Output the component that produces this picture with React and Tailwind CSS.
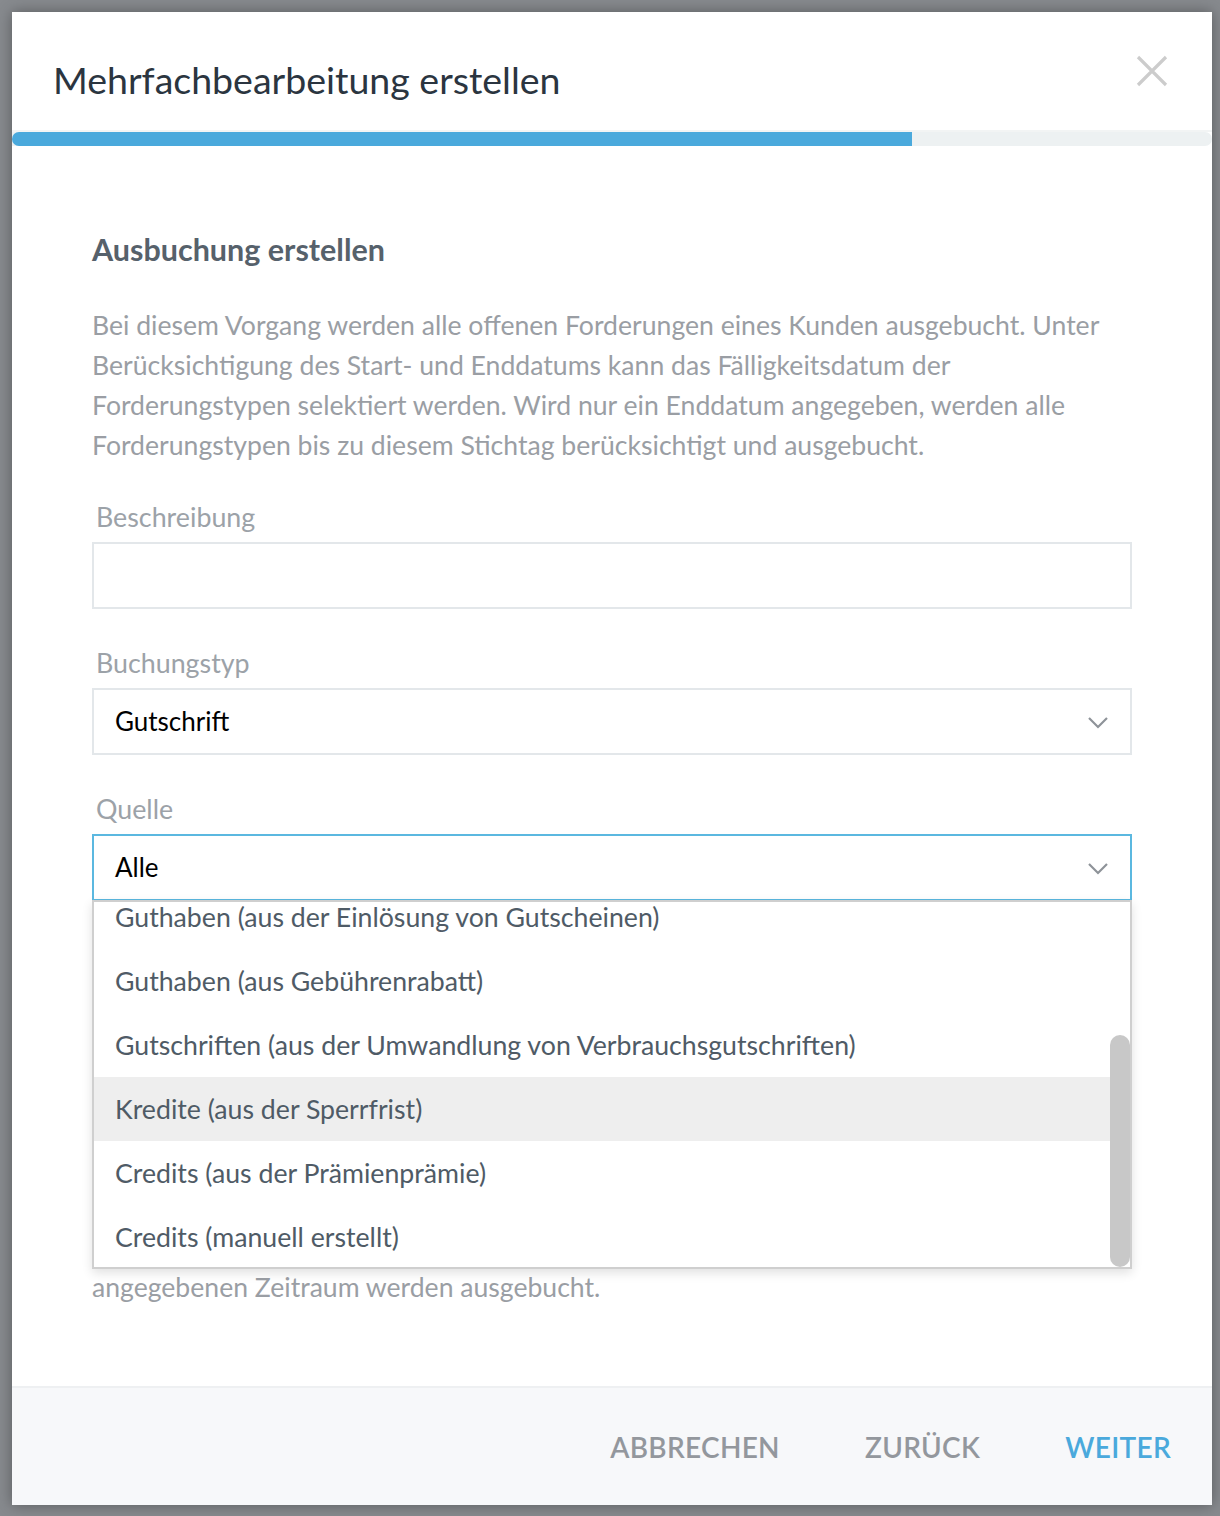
import React from "react";

/**
 * Mehrfachbearbeitung modal
 * Step "Ausbuchung erstellen" with an open source dropdown
 */
const options = [
  "Guthaben (aus der Einlösung von Gutscheinen)",
  "Guthaben (aus Gebührenrabatt)",
  "Gutschriften (aus der Umwandlung von Verbrauchsgutschriften)",
  "Kredite (aus der Sperrfrist)",
  "Credits (aus der Prämienprämie)",
  "Credits (manuell erstellt)",
];

const Chevron = () => (
  <svg width="22" height="14" viewBox="0 0 22 14" fill="none">
    <path d="M2 3l9 9 9-9" stroke="#8e9399" strokeWidth="2.2" />
  </svg>
);

const Label = ({ children }) => (
  <div className="pl-1 text-[26.8px] leading-[40px] text-[#9ca2a8] mb-[5px]">{children}</div>
);

const App = () => {
  return (
    <div
      className="min-h-screen bg-[#878a8e] pt-[12px] pl-[12px] pr-[8px] pb-[11px]"
      style={{ fontFamily: "Lato, 'Open Sans', sans-serif" }}
    >
      <div className="bg-white flex flex-col shadow-[0_0_14px_rgba(0,0,0,0.35)] h-[1493px]">
        {/* Header */}
        <div className="h-[120px] flex items-center justify-between pl-[41px] pr-[44px] border-b-2 border-[#f2f4f4]">
          <h1 className="mt-[18px] text-[37.5px] text-[#2b3540]">Mehrfachbearbeitung erstellen</h1>
          <svg width="32" height="32" viewBox="0 0 32 32">
            <path d="M2 2l28 28M30 2L2 30" stroke="#cccccc" strokeWidth="3.2" />
          </svg>
        </div>

        {/* Progress */}
        <div className="h-[14px] bg-[#edf1f2] rounded-r-full">
          <div className="h-full w-[75%] bg-[#4aa9dc] rounded-l-full" />
        </div>

        {/* Body */}
        <div className="flex-1 px-[80px] pt-[85px]">
          <h2 className="text-[30.5px] leading-[36px] font-bold text-[#56616b]">Ausbuchung erstellen</h2>
          <p className="mt-[38px] text-[26.6px] leading-[40px] text-[#9a9ea4]">
            Bei diesem Vorgang werden alle offenen Forderungen eines Kunden ausgebucht. Unter
            <br />
            Berücksichtigung des Start- und Enddatums kann das Fälligkeitsdatum der
            <br />
            Forderungstypen selektiert werden. Wird nur ein Enddatum angegeben, werden alle
            <br />
            Forderungstypen bis zu diesem Stichtag berücksichtigt und ausgebucht.
          </p>

          <div className="mt-[32px]">
            <Label>Beschreibung</Label>
            <div className="h-[67px] border-2 border-[#e3e7ea]" />
          </div>

          <div className="mt-[34px]">
            <Label>Buchungstyp</Label>
            <div className="h-[67px] border-2 border-[#e3e7ea] flex items-center justify-between pl-[21px] pr-[21px]">
              <span className="text-[26px] text-black">Gutschrift</span>
              <Chevron />
            </div>
          </div>

          <div className="mt-[34px] relative">
            <Label>Quelle</Label>
            <div className="h-[67px] border-2 border-[#5bb8e0] flex items-center justify-between pl-[21px] pr-[21px]">
              <span className="text-[26px] text-black">Alle</span>
              <Chevron />
            </div>

            {/* Open dropdown */}
            <div className="absolute left-0 right-0 top-[111px] h-[369px] z-10 bg-white border-2 border-[#cfcfcf] shadow-[0_4px_10px_rgba(0,0,0,0.12)] flex overflow-hidden">
              <div className="flex-1 -mt-[17px]">
                {options.map((opt, idx) => (
                  <div
                    key={idx}
                    className={`h-[64px] flex items-center pl-[21px] text-[26.7px] text-[#4f5b66] whitespace-nowrap ${
                      idx === 3 ? "bg-[#eeeeee]" : ""
                    }`}
                  >
                    {opt}
                  </div>
                ))}
              </div>
              <div className="w-[20px] flex flex-col">
                <div className="mt-[133px] flex-1 bg-[#c8c8c8] rounded-full" />
              </div>
            </div>
          </div>

          {/* Date fields (covered by dropdown) */}
          <div className="mt-[79px] grid grid-cols-2 gap-[40px]">
            <div className="h-[67px] border-2 border-[#e3e7ea]" />
            <div className="h-[67px] border-2 border-[#e3e7ea]" />
          </div>
          <p className="mt-[220px] text-[26.6px] leading-[40px] text-[#9a9ea4]">
            angegebenen Zeitraum werden ausgebucht.
          </p>
        </div>

        {/* Footer */}
        <div className="h-[119px] bg-[#f7f8fa] border-t-2 border-[#eef0f2] flex items-center justify-end pr-[41px] gap-[85px]">
          <button className="text-[28px] font-semibold text-[#93979d] tracking-[0.3px]">ABBRECHEN</button>
          <button className="text-[28px] font-semibold text-[#93979d] tracking-[0.3px]">ZURÜCK</button>
          <button className="text-[28px] font-semibold text-[#4aa9dc] tracking-[0.3px]">WEITER</button>
        </div>
      </div>
    </div>
  );
};

export default App;
